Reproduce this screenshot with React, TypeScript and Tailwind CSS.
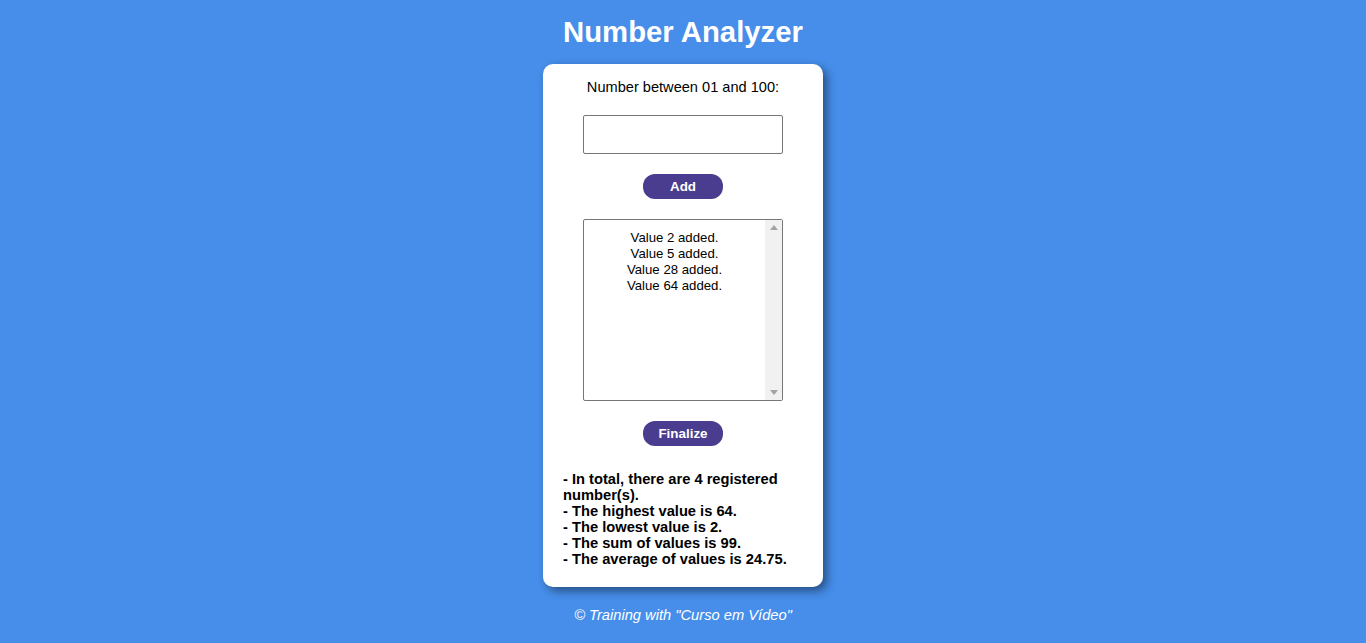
import React from "react";

const values = [2, 5, 28, 64];

export default function App() {
	const total = values.length;
	const highest = Math.max(...values);
	const lowest = Math.min(...values);
	const sum = values.reduce((a, b) => a + b, 0);
	const avg = sum / total;

	return (
		<div className="min-h-[643px] bg-[#468eea] font-['Liberation_Sans',Arial,sans-serif] flex flex-col items-center">
			<h1 className="text-[29.3px] leading-[36px] font-bold text-white mt-[14px]">Number Analyzer</h1>

			{/* Card */}
			<div className="mt-[14px] w-[280px] bg-white rounded-[10px] shadow-[4px_4px_10px_rgba(0,0,0,0.45)] px-[20px] pt-[14px] pb-[20px] flex flex-col items-center">
				<label className="text-[14.6px] leading-[18px] text-black">Number between 01 and 100:</label>

				<input
					type="number"
					className="mt-[19px] w-[200px] h-[39px] border border-[#767676] rounded-[2px] outline-none"
				/>

				<button className="mt-[20px] w-[80px] h-[25px] pt-[2px] rounded-[12px] bg-[#4a3d8f] text-white text-[13.4px] font-bold">
					Add
				</button>

				{/* Value list */}
				<div className="mt-[20px] w-[200px] h-[182px] border border-[#767676] rounded-[2px] flex">
					<div className="flex-1 pt-[10px] text-center text-[13.2px] leading-[16px] text-black">
						{values.map((v) => (
							<div key={v}>Value {v} added.</div>
						))}
					</div>
					<div className="w-[17px] bg-[#f1f1f1] flex flex-col items-center justify-between py-[5px]">
						<svg width="8" height="5" viewBox="0 0 8 5">
							<path d="M0 5 L4 0 L8 5 Z" fill="#a3a3a3" />
						</svg>
						<svg width="8" height="5" viewBox="0 0 8 5">
							<path d="M0 0 L4 5 L8 0 Z" fill="#a3a3a3" />
						</svg>
					</div>
				</div>

				<button className="mt-[20px] w-[80px] h-[25px] pt-[2px] rounded-[12px] bg-[#4a3d8f] text-white text-[13.4px] font-bold">
					Finalize
				</button>

				{/* Results */}
				<div className="mt-[25px] self-stretch text-[14.7px] leading-[16px] font-bold text-black">
					<p>- In total, there are {total} registered number(s).</p>
					<p>- The highest value is {highest}.</p>
					<p>- The lowest value is {lowest}.</p>
					<p>- The sum of values is {sum}.</p>
					<p>- The average of values is {avg}.</p>
				</div>
			</div>

			<p className="mt-[19px] text-[14.7px] leading-[18px] italic text-white">© Training with "Curso em Vídeo"</p>
		</div>
	);
}
